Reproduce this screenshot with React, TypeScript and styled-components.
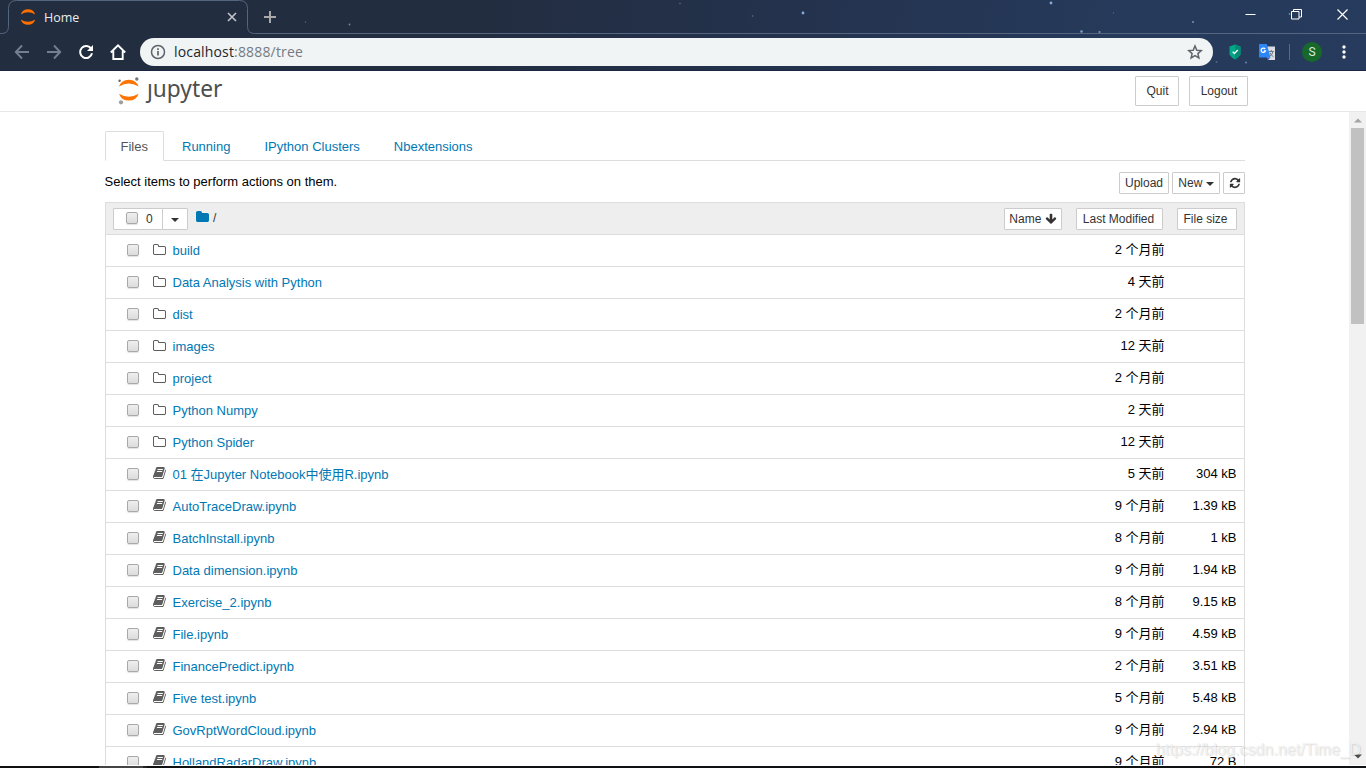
import React from 'react';
import styled, { createGlobalStyle } from 'styled-components';

const sans = '"Liberation Sans", Arial, "Noto Sans CJK SC", sans-serif';

const Global = createGlobalStyle`
  * { box-sizing: border-box; }
  html, body { margin: 0; padding: 0; overflow: hidden; }
  body { font: 13px/20px ${sans}; color: #000; background: #fff; }
`;

const Window = styled.div`
  width: 1366px;
  height: 768px;
  display: flex;
  flex-direction: column;
  overflow: hidden;
  position: relative;
`;

/* Browser chrome */
const Chrome = styled.header`
  position: relative;
  height: 71px;
  flex: none;
  background: linear-gradient(97deg, #222d3f 0%, #222d40 35%, #24324d 58%, #263a5b 82%, #263b5d 100%);
  border-bottom: 1px solid #1b2640;
`;

const Sky = styled.svg`
  position: absolute;
  inset: 0;
`;

const TabStrip = styled.div`
  position: relative;
  display: flex;
  align-items: center;
  height: 34px;
`;

const BrowserTab = styled.div`
  display: flex;
  align-items: center;
  width: 248px;
  height: 34px;
  padding: 0 9px 0 20px;
  color: #e9ecef;
`;

const TabTitle = styled.span`
  flex: 1;
  margin-left: 8px;
  padding-top: 2px;
  font: 12.5px/20px "Open Sans", sans-serif;
`;

const NewTab = styled.div`
  display: flex;
  margin-left: 15px;
  flex: 1;
`;

const WindowButtons = styled.div`
  display: flex;
  align-self: flex-start;
  height: 28px;
  align-items: center;
  gap: 35px;
  padding-right: 18px;
`;

const Toolbar = styled.div`
  position: relative;
  display: flex;
  align-items: center;
  height: 36px;
`;

const NavButtons = styled.div`
  display: flex;
  width: 140px;
  padding-left: 14px;
  gap: 16px;
`;

const AddressBar = styled.div`
  display: flex;
  align-items: center;
  width: 1073px;
  height: 28px;
  padding: 0 10px 0 10px;
  border-radius: 14px;
  background: #f0f4f5;
`;

const Url = styled.span`
  flex: 1;
  margin-left: 8px;
  font: 14px/20px "Open Sans", sans-serif;
  letter-spacing: 0.16px;
  color: #747b82;
  b { font-weight: 400; color: #21262c; }
`;

const Extensions = styled.div`
  display: flex;
  align-items: center;
  flex: 1;
  padding-left: 15px;
`;

const TranslateIcon = styled.svg`
  margin-left: 17px;
`;

const Divider = styled.i`
  width: 1px;
  height: 16px;
  margin: 0 12px 0 14px;
  background: #586a86;
`;

const Avatar = styled.span`
  width: 20px;
  height: 20px;
  border-radius: 50%;
  background: #17692b;
  color: #dcebdd;
  font: 12px/20px Roboto, sans-serif;
  text-align: center;
  margin-right: 20px;
`;

/* Notebook page */
const PageHeader = styled.div`
  display: flex;
  justify-content: space-between;
  flex: none;
  height: 41px;
  padding: 5px 118px 0 116px;
  border-bottom: 1px solid #e7e7e7;
`;

const Brand = styled.div`
  display: flex;
  height: 30px;
`;

const Wordmark = styled.span`
  margin-left: 5px;
  margin-top: -3px;
  font: 22.7px/32px "Noto Sans", sans-serif;
  color: #4e4e4e;
`;

const HeaderButtons = styled.div`
  display: flex;
  gap: 10px;
`;

const Button = styled.button<{ $w: number; $h?: number; $joined?: boolean; $shift?: number; $indent?: number }>`
  display: flex;
  align-items: center;
  justify-content: center;
  width: ${(p) => p.$w}px;
  height: ${(p) => p.$h ?? 22}px;
  margin-left: ${(p) => (p.$joined ? -1 : 0)}px;
  padding: 0 ${(p) => p.$shift ?? 0}px 0 ${(p) => p.$indent ?? 0}px;
  border: 1px solid #ccc;
  border-radius: 1px;
  background: #fff;
  color: #333;
  font: 12px/18px ${sans};
  white-space: pre;
`;

const Body = styled.div`
  display: flex;
  flex: none;
  height: 653px;
  overflow: hidden;
`;

const Site = styled.main`
  flex: 1;
  padding: 19px 104px 0 105px;
`;

const Tabs = styled.nav`
  display: flex;
  height: 30px;
  border-bottom: 1px solid #ddd;
`;

const Tab = styled.a<{ $active?: boolean }>`
  height: 30px;
  margin-right: ${(p) => (p.$active ? 2 : 3)}px;
  padding: 6px 15px 0 16px;
  line-height: 20px;
  color: ${(p) => (p.$active ? '#555' : '#0078b4')};
  ${(p) =>
    p.$active &&
    `border: 1px solid #ddd; border-bottom-color: #fff; border-radius: 2px 2px 0 0; width: 59px; padding: 5px 14px 0 14.5px;`}
`;

const Actions = styled.div`
  display: flex;
  align-items: flex-start;
  height: 41px;
  padding-top: 11px;
  gap: 3px;
`;

const Hint = styled.span`
  flex: 1;
  margin-left: -0.5px;
`;

const List = styled.section`
  border: 1px solid #ddd;
`;

const ListHeader = styled.div`
  display: flex;
  height: 31px;
  padding: 5px 7px 0;
  background: #eee;
`;

const Crumb = styled.span`
  display: flex;
  flex: 1;
  margin: 0 0 0 8px;
  gap: 3px;
  color: #333;
  font-size: 12px;
  line-height: 21px;
  svg { margin-top: 2px; }
`;

const SortButtons = styled.div`
  display: flex;
  gap: 14px;
`;

const Row = styled.div`
  display: flex;
  height: 32px;
  padding: 6px 7.5px 0 21px;
  border-top: 1px solid #ddd;
`;

const CheckBox = styled.i<{ $row?: boolean }>`
  flex: none;
  width: 12px;
  height: 12px;
  margin: ${(p) => (p.$row ? '3px 0 0' : '-2px 1px 0 0')};
  border: 1px solid #a9a9a9;
  border-radius: 2px;
  background: linear-gradient(#efefef, #dcdcdc);
  box-shadow: 0 1px 1px rgba(0, 0, 0, 0.12);
`;

const IconCell = styled.span<{ $book: boolean }>`
  display: flex;
  width: 19.5px;
  margin: ${(p) => (p.$book ? 1 : 2)}px 0 0 14px;
`;

const Name = styled.a`
  flex: 1;
  color: #0078b4;
`;

const Modified = styled.span`
  width: 90px;
  margin-top: -1px;
  text-align: right;
`;

const Size = styled.span`
  width: 72px;
  margin-top: -1px;
  text-align: right;
`;

const Scrollbar = styled.div`
  display: flex;
  flex-direction: column;
  align-items: center;
  justify-content: space-between;
  width: 17px;
  padding: 6px 0 6px;
  background: #f1f1f1;
`;

const Thumb = styled.i`
  width: 13px;
  height: 196px;
  margin: 5px 0 auto;
  background: #c1c1c1;
`;

const Taskbar = styled.footer`
  height: 3px;
  flex: none;
  border-top: 1px solid #fff;
  background: linear-gradient(90deg, #111 99px, #444 99px, #444 143px, #222 143px, #222 147px, #101113 147px);
`;

const Watermark = styled.span`
  position: absolute;
  left: 1156px;
  top: 739px;
  font: 16px/22px ${sans};
  letter-spacing: 0.06px;
  color: rgba(255, 255, 255, 0.7);
  text-shadow: 0 0 1px rgba(0, 0, 0, 0.14), 1px 1px 1px rgba(0, 0, 0, 0.1);
  white-space: nowrap;
`;

const BOOK =
  'M1639 478q40 57 18 129l-275 906q-19 64-76.5 107.5t-122.5 43.5h-923q-77 0-148.5-53.5t-99.5-131.5q-24-67-2-127 0-4 3-27t4-37q1-8-3-21.5t-3-19.5q2-11 8-21t16.5-23.5 16.5-23.5q23-38 45-91.5t30-91.5q3-10 .5-30t-.5-28q3-11 17-28t17-23q21-36 42-92t25-90q1-9-2.5-32t.5-28q4-13 22-30.5t22-22.5q19-26 42.5-84.5t27.5-96.5q1-8-3-25.5t-2-26.5q2-8 9-18t18-23 17-21q8-12 16.5-30.5t15-35 16-36 19.5-32 26.5-23.5 36-11.5 47.5 5.5l-1 3q38-9 51-9h761q74 0 114 56t18 130l-274 906q-36 119-71.5 153.5t-128.5 34.5h-869q-27 0-38 15-11 16-1 43 24 70 144 70h923q29 0 56-15.5t35-41.5l300-987q7-22 5-57 38 15 59 43zm-1064 2q-4 13 2 22.5t20 9.5h608q13 0 25.5-9.5t16.5-22.5l21-64q4-13-2-22.5t-20-9.5h-608q-13 0-25.5 9.5t-16.5 22.5zm-83 256q-4 13 2 22.5t20 9.5h608q13 0 25.5-9.5t16.5-22.5l21-64q4-13-2-22.5t-20-9.5h-608q-13 0-25.5 9.5t-16.5 22.5z';
const FOLDER_O =
  'M1536 1312v-704q0-40-28-68t-68-28h-704q-40 0-68-28t-28-68v-64q0-40-28-68t-68-28h-320q-40 0-68 28t-28 68v960q0 40 28 68t68 28h1216q40 0 68-28t28-68zm128-704v704q0 92-66 158t-158 66h-1216q-92 0-158-66t-66-158v-960q0-92 66-158t158-66h320q92 0 158 66t66 158v32h672q92 0 158 66t66 158z';
const FOLDER =
  'M1664 608v704q0 92-66 158t-158 66h-1216q-92 0-158-66t-66-158v-960q0-92 66-158t158-66h320q92 0 158 66t66 158v32h672q92 0 158 66t66 158z';
const REFRESH =
  'M1639 1056q0 5-1 7-64 268-268 434.5t-478 166.5q-146 0-282.5-55t-243.5-157l-129 129q-19 19-45 19t-45-19-19-45v-448q0-26 19-45t45-19h448q26 0 45 19t19 45-19 45l-137 137q71 66 161 102t187 36q134 0 250-65t186-179q11-17 53-117 8-23 30-23h192q13 0 22.5 9.5t9.5 22.5zm25-800v448q0 26-19 45t-45 19h-448q-26 0-45-19t-19-45 19-45l138-138q-148-137-349-137-134 0-250 65t-186 179q-11 17-53 117-8 23-30 23h-199q-13 0-22.5-9.5t-9.5-22.5v-7q65-268 270-434.5t480-166.5q146 0 284 55.5t245 156.5l130-129q19-19 45-19t45 19 19 45z';
const ARROW_DOWN =
  'M1675 832q0 53-37 90l-651 652q-39 37-91 37-53 0-90-37l-651-652q-38-36-38-90 0-53 38-91l74-75q39-37 91-37 53 0 90 37l294 294v-704q0-52 38-90t90-38h128q52 0 90 38t38 90v704l294-294q37-37 90-37 52 0 91 37l75 75q37 39 37 91z';

function Glyph({ d, color, size = 14 }: { d: string; color: string; size?: number }) {
  return (
    <svg width={size} height={size} viewBox="0 0 1792 1792" fill={color}>
      <path d={d} />
    </svg>
  );
}

function Caret() {
  return (
    <svg width="8" height="6" viewBox="0 0 8 6" fill="#333">
      <path d="M0 2h8L4 6z" />
    </svg>
  );
}

const STARS = [
  [305.5, 22, 0.7, 0.5], [349.5, 24.5, 0.9, 0.7], [574.5, 33, 0.6, 0.4], [680, 3.5, 0.8, 0.5],
  [752.5, 16, 0.8, 0.5], [803, 13, 1.4, 0.9], [1051, 3, 1.4, 0.9], [1113.5, 13, 0.7, 0.4],
  [1193, 22, 1, 0.7], [1081.5, 31.5, 1.3, 0.8], [1099.5, 32, 1.1, 0.7], [1289.5, 14, 0.9, 0.6],
  [1216.5, 62, 0.9, 0.4], [1246, 62.5, 1, 0.6],
];

type Item = { name: string; modified: string; size?: string };
const ITEMS: Item[] = [
  { name: 'build', modified: '2 个月前' },
  { name: 'Data Analysis with Python', modified: '4 天前' },
  { name: 'dist', modified: '2 个月前' },
  { name: 'images', modified: '12 天前' },
  { name: 'project', modified: '2 个月前' },
  { name: 'Python Numpy', modified: '2 天前' },
  { name: 'Python Spider', modified: '12 天前' },
  { name: '01 在Jupyter Notebook中使用R.ipynb', modified: '5 天前', size: '304 kB' },
  { name: 'AutoTraceDraw.ipynb', modified: '9 个月前', size: '1.39 kB' },
  { name: 'BatchInstall.ipynb', modified: '8 个月前', size: '1 kB' },
  { name: 'Data dimension.ipynb', modified: '9 个月前', size: '1.94 kB' },
  { name: 'Exercise_2.ipynb', modified: '8 个月前', size: '9.15 kB' },
  { name: 'File.ipynb', modified: '9 个月前', size: '4.59 kB' },
  { name: 'FinancePredict.ipynb', modified: '2 个月前', size: '3.51 kB' },
  { name: 'Five test.ipynb', modified: '5 个月前', size: '5.48 kB' },
  { name: 'GovRptWordCloud.ipynb', modified: '9 个月前', size: '2.94 kB' },
  { name: 'HollandRadarDraw.ipynb', modified: '9 个月前', size: '72 B' },
];

function BrowserChrome() {
  return (
    <Chrome>
      <Sky width="1366" height="70">
        {STARS.map(([x, y, r, o]) => (
          <circle key={x} cx={x} cy={y} r={r} fill="#8fb8ea" opacity={o} />
        ))}
        <path
          d="M0 33.5h1.5q7 0 7-7V8.5q0-8 8-8h223q8 0 8 8v18q0 7 7 7H1366"
          fill="none"
          stroke="#55657f"
        />
      </Sky>
      <TabStrip>
        <BrowserTab>
          <svg width="16" height="16" viewBox="0 0 16 16" fill="#ff6f00">
            <path d="M.8 5.600a7.500 7.500 0 0 1 14.400 0Q8 .9.800 5.600zM.8 10.400a7.500 7.500 0 0 0 14.400 0q-7.200 4.700-14.400 0z" />
          </svg>
          <TabTitle>Home</TabTitle>
          <svg width="14" height="14" viewBox="0 0 14 14" stroke="#c3c7cd" strokeWidth="1.600">
            <path d="M3 3l8 8M11 3l-8 8" />
          </svg>
        </BrowserTab>
        <NewTab>
          <svg width="14" height="14" viewBox="0 0 14 14" stroke="#a9a9a9" strokeWidth="2">
            <path d="M7 1v12M1 7h12" />
          </svg>
        </NewTab>
        <WindowButtons>
          <svg width="11" height="11" stroke="#fff" fill="none"><path d="M.5 5.500h10" /></svg>
          <svg width="11" height="11" stroke="#fff" fill="none">
            <path d="M.5 2.500h7.500v7.500h-7.500zM2.500 2.500v-2h8v7.500h-2.500" />
          </svg>
          <svg width="11" height="11" stroke="#fff" strokeWidth="1.200"><path d="M.5.500l10 10M10.500.500l-10 10" /></svg>
        </WindowButtons>
      </TabStrip>
      <Toolbar>
        <NavButtons>
          <svg width="16" height="16" viewBox="0 0 16 16" fill="none" stroke="#74808f" strokeWidth="1.900">
            <path d="M15 8H2M8 1.500L1.800 8 8 14.500" />
          </svg>
          <svg width="16" height="16" viewBox="0 0 16 16" fill="none" stroke="#74808f" strokeWidth="1.900">
            <path d="M1 8h13M8 1.500L14.200 8 8 14.500" />
          </svg>
          <svg width="16" height="16" viewBox="0 0 16 16" fill="none" stroke="#fff" strokeWidth="2">
            <path d="M13.300 5A6 6 0 1 0 14 9.300" />
            <path d="M15 1v6H9z" fill="#fff" stroke="none" />
          </svg>
          <svg width="16" height="16" viewBox="0 0 16 16" fill="none" stroke="#fff" strokeWidth="1.900">
            <path d="M.8 8.500L8 1.400l7.200 7.100M3.300 7v8h9.400V7" />
          </svg>
        </NavButtons>
        <AddressBar>
          <svg width="16" height="16" viewBox="0 0 16 16" fill="none" stroke="#5f6368" strokeWidth="1.500">
            <circle cx="8" cy="8" r="6.500" />
            <path d="M8 7v4.500M8 4.200v1.700" strokeWidth="1.700" />
          </svg>
          <Url><b>localhost</b>:8888/tree</Url>
          <svg width="16" height="16" viewBox="0 0 16 16" fill="none" stroke="#5f6368" strokeWidth="1.500">
            <path d="M8 2l1.800 4.200 4.500.4-3.400 3 1 4.400L8 11.600 4.100 14l1-4.400-3.400-3 4.500-.4z" />
          </svg>
        </AddressBar>
        <Extensions>
          <svg width="14" height="16" viewBox="0 0 14 16">
            <path d="M7 .5l5.500 2v8L10 13.500l-3 2-3-2-2.500-3v-8z" fill="#00a887" />
            <path d="M7 .5l5.500 2v8L10 13.500l-3 2z" fill="#078a74" />
            <path d="M4.700 7.800l1.700 1.700L9.800 6" stroke="#fff" strokeWidth="1.300" fill="none" />
          </svg>
          <TranslateIcon width="16" height="16" viewBox="0 0 16 16">
            <path d="M6 2.500h10V16H9z" fill="#d9dde1" />
            <path d="M8 13.500h3.500L9 16z" fill="#3554c8" />
            <path d="M0 0h7.800L11.500 13.500H0z" fill="#2c87f6" />
            <path d="M6.200 5A2.200 2.200 0 1 0 6.500 6.800H4.700" stroke="#fff" strokeWidth="1.200" fill="none" />
            <path d="M9.800 7.500h5M12.300 6v1.500M14 7.500q-.7 3.500-3.500 5M11 8.800q1 2.500 3.500 4" stroke="#6d7882" fill="none" />
          </TranslateIcon>
          <Divider />
          <Avatar>S</Avatar>
          <svg width="4" height="14" fill="#fff">
            <circle cx="2" cy="2" r="1.700" /><circle cx="2" cy="7" r="1.700" /><circle cx="2" cy="12" r="1.700" />
          </svg>
        </Extensions>
      </Toolbar>
    </Chrome>
  );
}

export default function App() {
  return (
    <Window>
      <Global />
      <BrowserChrome />
      <PageHeader>
        <Brand>
          <svg width="26" height="30" viewBox="0 0 26 30">
            <path d="M3 10.600a10.400 10.400 0 0 1 19.600 0Q12.800 4.600 3 10.600zM3 17.700a10.400 10.400 0 0 0 19.600 0q-9.800 6-19.600 0z" fill="#ff7300" />
            <circle cx="20.800" cy="3" r="1.700" fill="#767677" />
            <circle cx="3.600" cy="4.800" r="1.200" fill="#616262" />
            <circle cx="5" cy="26.300" r="2.100" fill="#9e9e9e" />
          </svg>
          <Wordmark>ȷupyter</Wordmark>
        </Brand>
        <HeaderButtons>
          <Button $w={44} $h={30} $indent={1}>Quit</Button>
          <Button $w={59} $h={30} $indent={1}>Logout</Button>
        </HeaderButtons>
      </PageHeader>
      <Body>
        <Site>
          <Tabs>
            <Tab $active>Files</Tab>
            <Tab>Running</Tab>
            <Tab>IPython Clusters</Tab>
            <Tab>Nbextensions</Tab>
          </Tabs>
          <Actions>
            <Hint>Select items to perform actions on them.</Hint>
            <Button $w={50}>Upload</Button>
            <Button $w={48}>New <Caret /></Button>
            <Button $w={22} $indent={1}><Glyph d={REFRESH} color="#333" size={12} /></Button>
          </Actions>
          <List>
            <ListHeader>
              <Button $w={50} $indent={3}><CheckBox />{'  0'}</Button>
              <Button $w={26} $joined><Caret /></Button>
              <Crumb><Glyph d={FOLDER} color="#0078b4" /> /</Crumb>
              <SortButtons>
                <Button $w={58}>Name <Glyph d={ARROW_DOWN} color="#333" size={12} /></Button>
                <Button $w={87} $shift={2}>Last Modified</Button>
                <Button $w={60} $shift={3}>File size</Button>
              </SortButtons>
            </ListHeader>
            {ITEMS.map((it) => (
              <Row key={it.name}>
                <CheckBox $row />
                <IconCell $book={!!it.size}><Glyph d={it.size ? BOOK : FOLDER_O} color="#5e5e5e" /></IconCell>
                <Name>{it.name}</Name>
                <Modified>{it.modified}</Modified>
                <Size>{it.size}</Size>
              </Row>
            ))}
          </List>
        </Site>
        <Scrollbar>
          <svg width="8" height="5" fill="#a3a3a3"><path d="M0 4.500h8L4 .5z" /></svg>
          <Thumb />
          <svg width="8" height="5" fill="#505050"><path d="M0 .5h8L4 4.500z" /></svg>
        </Scrollbar>
      </Body>
      <Taskbar />
      <Watermark>https://blog.csdn.net/Time_D</Watermark>
    </Window>
  );
}
